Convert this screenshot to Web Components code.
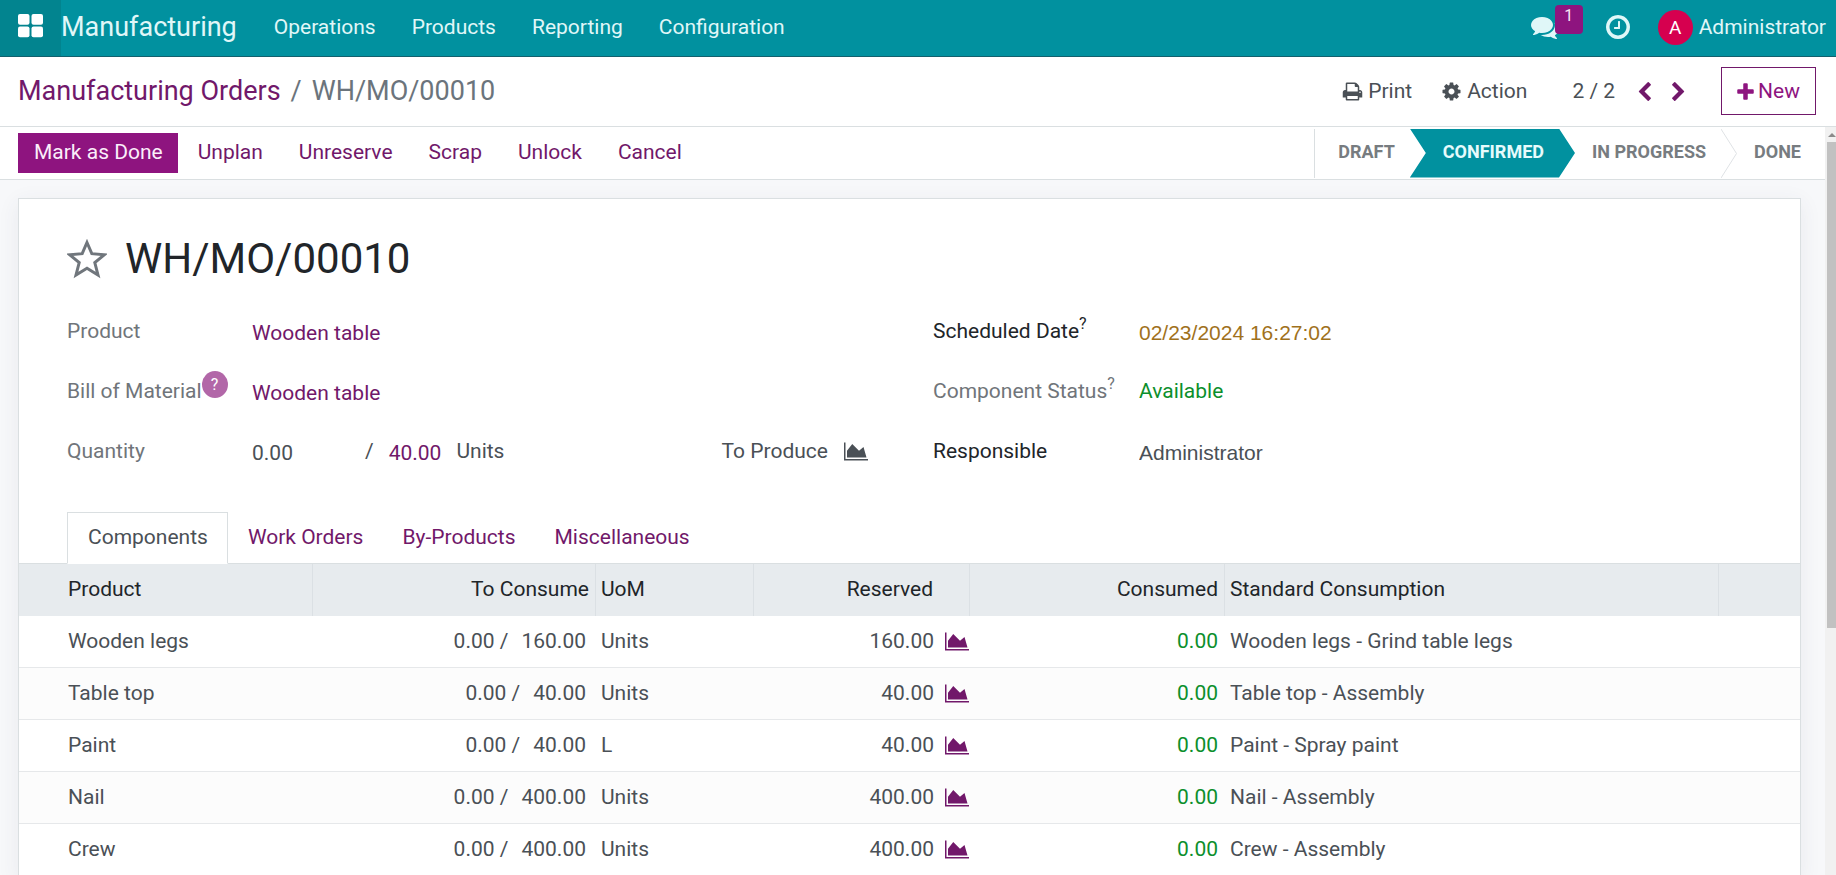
<!DOCTYPE html>
<html lang="en">
<head>
<meta charset="utf-8">
<title>WH/MO/00010 - Manufacturing</title>
<style>
  :root {
    --teal: #01919f;
    --teal-dark: #02848f;
    --purple: #8e147f;
    --link: #71186a;
    --ink: #212529;
    --text: #4a5056;
    --muted: #70757a;
    --line: #dadfe1;
    --green: #0c8f2c;
  }
  html, body { height: 100%; margin: 0; }
  body {
    font-family: Roboto, "Liberation Sans", sans-serif;
    font-size: 21px;
    line-height: 30px;
    color: var(--text);
    background: #fff;
    overflow: hidden;
  }
</style>
</head>
<body>
<mo-app></mo-app>

<script>
const define = (name, html, extend) => {
  const template = document.createElement('template');
  template.innerHTML = html;
  customElements.define(name, class extends HTMLElement {
    constructor() {
      super();
      this.attachShadow({ mode: 'open' }).append(template.content.cloneNode(true));
    }
    connectedCallback() { if (extend) extend(this, this.shadowRoot); }
  });
};

/* ---- icons ---- */
const ICONS = {
  area: ['0 0 2048 1792', '<path d="M2048 1536v128H0V128h128v1408h1920zM1664 512l256 896H256V832l448-576 576 576z"/>'],
  print: ['0 0 1792 1792', '<path d="M448 1536h896v-256H448v256zm0-640h896V512h-160q-40 0-68-28t-28-68V256H448v640zm1152 64q0-26-19-45t-45-19-45 19-19 45 19 45 45 19 45-19 19-45zm128 0v416q0 13-9.500 22.500t-22.500 9.500h-224v160q0 40-28 68t-68 28H416q-40 0-68-28t-28-68v-160H96q-13 0-22.500-9.500T64 1376V960q0-79 56.500-135.500T256 768h64V224q0-40 28-68t68-28h672q40 0 88 20t76 48l152 152q28 28 48 76t20 88v256h64q79 0 135.500 56.500T1728 960z"/>'],
  cog: ['0 0 1792 1792', '<path d="M1152 896q0-106-75-181t-181-75-181 75-75 181 75 181 181 75 181-75 75-181zm512-109v222q0 12-8 23t-20 13l-185 28q-19 54-39 91 35 50 107 138 10 12 10 25t-9 23q-27 37-99 108t-94 71q-12 0-26-9l-138-108q-44 23-91 38-16 136-29 186-7 28-36 28h-222q-14 0-24.500-8.500t-11.500-21.500l-28-184q-49-16-90-37l-141 107q-10 9-25 9-14 0-25-11-126-114-165-168-7-10-7-23 0-12 8-23 15-21 51-66.500t54-70.500q-27-50-41-99l-183-27q-13-2-21-12.500t-8-23.500v-222q0-12 8-23t19-13l186-28q14-46 39-92-40-57-107-138-10-12-10-24 0-10 9-23 26-36 98.500-107.500t94.500-71.500q13 0 26 10l138 107q44-23 91-38 16-136 29-186 7-28 36-28h222q14 0 24.500 8.500t11.500 21.500l28 184q49 16 90 37l142-107q9-9 24-9 13 0 25 10 129 119 165 170 7 8 7 22 0 12-8 23-15 21-51 66.500t-54 70.500q26 50 41 98l183 28q13 2 21 12.500t8 23.500z"/>'],
  plus: ['192 0 1408 1792', '<path d="M1600 800v192q0 40-28 68t-68 28h-416v416q0 40-28 68t-68 28H800q-40 0-68-28t-28-68v-416H288q-40 0-68-28t-28-68V800q0-40 28-68t68-28h416V288q0-40 28-68t68-28h192q40 0 68 28t28 68v416h416q40 0 68 28t28 68z"/>'],
  prev: ['0 -64 1792 1792', '<path d="M1427 301l-531 531 531 531q19 19 19 45t-19 45l-166 166q-19 19-45 19t-45-19L429 877q-19-19-19-45t19-45l742-742q19-19 45-19t45 19l166 166q19 19 19 45t-19 45z"/>'],
  next: ['0 -64 1792 1792', '<path d="M1363 877l-742 742q-19 19-45 19t-45-19l-166-166q-19-19-19-45t19-45l531-531-531-531q-19-19-19-45t19-45L531 45q19-19 45-19t45 19l742 742q19 19 19 45t-19 45z"/>'],
  comments: ['0 0 1792 1792', '<path d="M1408 768q0 139-94 257t-256.500 186.500T704 1280q-86 0-176-16-124 88-278 128-36 9-86 16h-3q-11 0-20.500-8t-11.500-21q-1-3-1-6.500t.5-6.500 2-6l2.500-5 3.500-5.500 4-5 4.500-5 4-4.500q5-6 23-25t26-29.500 22.500-29 25-38.500 20.500-44q-124-72-195-177T0 768q0-139 94-257t256.500-186.500T704 256t353.500 68.500T1314 511t94 257zm384 256q0 120-71 224.500T1526 1425q10 24 20.500 44t25 38.500 22.500 29 26 29.500 23 25q1 1 4 4.500t4.500 5 4 5 3.500 5.500l2.500 5 2 6 .5 6.500-1 6.500q-3 14-13 22t-22 7q-50-7-86-16-154-40-278-128-90 16-176 16-271 0-472-132 58 4 88 4 161 0 309-45t264-129q125-92 192-212t67-254q0-77-23-152 129 71 204 178t75 230z"/>'],
  clock: ['0 0 1792 1792', '<path d="M1024 544v448q0 14-9 23t-23 9H672q-14 0-23-9t-9-23v-64q0-14 9-23t23-9h224V544q0-14 9-23t23-9h64q14 0 23 9t9 23zm416 352q0-148-73-273t-198-198-273-73-273 73-198 198-73 273 73 273 198 198 273 73 273-73 198-198 73-273zm224 0q0 209-103 385.500T1281.500 1561 896 1664t-385.500-103T231 1281.500 128 896t103-385.500T510.500 231 896 128t385.500 103T1561 510.500 1664 896z"/>'],
  apps: ['0 0 25 24', '<rect width="11.500" height="10.800" rx="2"/><rect x="13.500" width="11.500" height="10.800" rx="2"/><rect y="12.500" width="11.500" height="10.800" rx="2"/><rect x="13.500" y="12.500" width="11.500" height="10.800" rx="2"/>'],
  star: ['0 0 40 40', '<path d="M20 3.500l4.800 11.200 12.700 1-9.700 7.800 3.200 12.500L20 29.300 9 36l3.200-12.500-9.700-7.800 12.700-1z" fill="none" stroke="currentColor" stroke-width="3"/>']
};
define('mo-icon', `
  <style>
    :host { display: inline-flex; flex: none; width: 21px; height: 21px; }
    svg { width: 100%; height: 100%; fill: currentColor; display: block; }
  </style>
  <svg aria-hidden="true"></svg>`, (host, root) => {
  const [box, shape] = ICONS[host.getAttribute('name')];
  const svg = root.querySelector('svg');
  svg.setAttribute('viewBox', box);
  svg.innerHTML = shape;
});

/* ---- top navigation ---- */
define('mo-navbar', `
  <style>
    :host { display: flex; align-items: stretch; height: 56px; background: var(--teal);
      border-bottom: 1px solid #12606d; color: #e0f7f8; }
    a { color: inherit; text-decoration: none; }
    button { font: inherit; color: inherit; background: none; border: 0; padding: 0; }
    .apps { width: 61px; background: var(--teal-dark); color: #fff; display: flex;
      align-items: center; padding: 0 0 4px 18px; box-sizing: border-box; }
    .apps mo-icon { width: 25px; height: 24px; }
    .brand { font-size: 27px; padding: 0 19px 2px 0; display: flex; align-items: center; }
    nav { display: flex; flex: 1; }
    nav a { display: flex; align-items: center; padding: 0 18px 2px; }
    .tray { display: flex; align-items: center; padding: 0 10px 2px 0; }
    .chat { position: relative; display: flex; margin-right: 45px; }
    .chat mo-icon, .clock mo-icon { width: 28px; height: 28px; }
    .badge { position: absolute; left: 24px; top: -8px; width: 28px; height: 29px; border-radius: 4px;
      background: var(--purple); color: #f5e6f4; font-size: 16px; line-height: 22px; text-align: center; }
    .clock { display: flex; margin-right: 26px; }
    .user { display: flex; align-items: center; gap: 6px; }
    .avatar { width: 35px; height: 35px; border-radius: 50%; background: #d6004f; color: #fff;
      font-size: 19px; line-height: 35px; text-align: center; }
  </style>
  <button class="apps" aria-label="Home menu"><mo-icon name="apps"></mo-icon></button>
  <a class="brand" href="#">Manufacturing</a>
  <nav>
    <a href="#">Operations</a><a href="#">Products</a><a href="#">Reporting</a><a href="#">Configuration</a>
  </nav>
  <div class="tray">
    <button class="chat" aria-label="Messages"><mo-icon name="comments"></mo-icon><span class="badge">1</span></button>
    <button class="clock" aria-label="Activities"><mo-icon name="clock"></mo-icon></button>
    <button class="user"><span class="avatar">A</span>Administrator</button>
  </div>`);

/* ---- breadcrumb and record actions ---- */
define('mo-control-panel', `
  <style>
    :host { display: flex; align-items: center; justify-content: space-between; box-sizing: border-box; height: 70px;
      padding: 0 20px 1px 18px; border-bottom: 1px solid var(--line); background: #fff; }
    ol { display: flex; gap: 10px; list-style: none; margin: 0; padding: 0; font-size: 27px; color: #6b747c; }
    a { color: var(--link); text-decoration: none; }
    button { font: inherit; color: inherit; background: none; border: 0; padding: 0; display: flex; align-items: center; }
    .actions { display: flex; align-items: center; }
    .menu { gap: 5px; margin-right: 29px; }
    .menu.last { margin-right: 45px; }
    .pager { margin-right: 12px; }
    .step { width: 34px; justify-content: center; color: var(--link); }
    .new { box-sizing: border-box; height: 48px; margin-left: 26px; padding: 0 15px; gap: 4px;
      border: 1px solid var(--link); color: var(--purple); }
    .new mo-icon { width: 17px; height: 21px; }
  </style>
  <ol><li><a href="#">Manufacturing Orders</a></li><li>/</li><li>WH/MO/00010</li></ol>
  <div class="actions">
    <button class="menu"><mo-icon name="print"></mo-icon>Print</button>
    <button class="menu last"><mo-icon name="cog"></mo-icon>Action</button>
    <span class="pager">2 / 2</span>
    <button class="step" aria-label="Previous"><mo-icon name="prev"></mo-icon></button>
    <button class="step" aria-label="Next"><mo-icon name="next"></mo-icon></button>
    <button class="new"><mo-icon name="plus"></mo-icon>New</button>
  </div>`);

/* ---- status bar ---- */
define('mo-button', `
  <style>
    :host { display: block; }
    button { font: inherit; height: 40px; padding: 0 16px 2px; border: 0; background: none; color: var(--link); display: block; }
    :host([primary]) button { background: var(--purple); color: #fbeefa; padding-right: 15px; }
  </style>
  <button><slot></slot></button>`);

define('mo-stage', `
  <style>
    :host { display: block; height: 49px; }
    button { font: inherit; font-size: 18px; font-weight: 700; color: #777c80; height: 100%; border: 0; background: none;
      display: block; padding: 0 15px 2px 33px; }
    :host([first]) button { padding-left: 23px; border-left: 1px solid var(--line); }
    :host([last]) button { padding-right: 24px; }
    :host([current]) button { background: var(--teal); color: #e6fbfc; padding-right: 31px;
      clip-path: polygon(0 0, calc(100% - 16px) 0, 100% 50%, calc(100% - 16px) 100%, 0 100%, 16px 50%); }
    :host([current]) { margin-right: -16px; }
    :host([arrow]) { display: flex; }
    svg { display: none; flex: none; width: 16px; height: 49px; margin-right: -16px; }
    :host([arrow]) svg { display: block; }
  </style>
  <button><slot></slot></button>
  <svg viewBox="0 0 16 49" aria-hidden="true"><path d="M0 0l15.500 24.500L0 49" fill="none" stroke="#dfe2e5"/></svg>`);

define('mo-status-bar', `
  <style>
    :host { display: flex; justify-content: space-between; align-items: center; height: 52px;
      background: #fff; border-bottom: 1px solid var(--line); padding-left: 18px; }
    div { display: flex; }
    .buttons { gap: 4px; }
  </style>
  <div class="buttons">
    <mo-button primary>Mark as Done</mo-button><mo-button>Unplan</mo-button><mo-button>Unreserve</mo-button>
    <mo-button>Scrap</mo-button><mo-button>Unlock</mo-button><mo-button>Cancel</mo-button>
  </div>
  <div>
    <mo-stage first>DRAFT</mo-stage><mo-stage current>CONFIRMED</mo-stage>
    <mo-stage arrow>IN PROGRESS</mo-stage><mo-stage last>DONE</mo-stage>
  </div>`);

/* ---- order form ---- */
define('mo-order-form', `
  <style>
    :host { display: block; padding: 35px 48px 0; }
    .title { display: flex; align-items: center; gap: 18px; height: 50px; }
    .title button { border: 0; background: none; padding: 0; color: #70767c; display: flex; }
    .title mo-icon { width: 40px; height: 40px; }
    h1 { margin: 0; font-size: 42px; line-height: 50px; font-weight: 400; color: var(--ink); }
    form { display: grid; grid-template-columns: 1fr 1fr; column-gap: 64px; margin: 17px 17px 0 0; }
    .row { display: grid; grid-template-columns: 185px 1fr; height: 60px; align-items: center; white-space: nowrap; }
    .col + .col .row { grid-template-columns: 206px 1fr; }
    label, .label { color: var(--muted); display: flex; align-items: center; }
    .strong { color: var(--ink); }
    a { color: var(--link); text-decoration: none; padding-top: 3px; }
    input { font: inherit; color: inherit; border: 0; padding: 3px 0 0; margin: 0; background: none; width: 100%; min-width: 0; outline: 0; }
    .plain { font-family: "Liberation Sans", Arial, sans-serif; }
    .date { color: #a0711c; }
    sup { font-size: 16px; line-height: 16px; padding-bottom: 14px; }
    .help { box-sizing: border-box; width: 26px; height: 27px; margin: 0 0 14px; padding: 0; border-radius: 50%;
      background: #b267a8; color: #fff; line-height: 27px; text-align: center; }
    .ok { color: var(--green); }
    .qty { display: flex; align-items: center; }
    .qty input { width: 112px; margin-right: 1px; }
    .qty a { margin: 0 15px; }
    .qty .produce { margin-left: auto; margin-right: 16px; }
    .qty button { border: 0; background: none; padding: 0; color: inherit; display: flex; margin-right: 1px; }
    .qty mo-icon { width: 24px; }
  </style>
  <div class="title">
    <button aria-label="Priority"><mo-icon name="star"></mo-icon></button>
    <h1>WH/MO/00010</h1>
  </div>
  <form>
    <div class="col">
      <div class="row"><span class="label">Product</span><a href="#">Wooden table</a></div>
      <div class="row"><span class="label">Bill of Material<sup class="help">?</sup></span><a href="#">Wooden table</a></div>
      <div class="row"><label for="qty">Quantity</label>
        <div class="qty"><input id="qty" value="0.00"><span>/</span><a href="#">40.00</a><span>Units</span>
          <span class="produce">To Produce</span><button type="button" aria-label="Forecast"><mo-icon name="area"></mo-icon></button></div>
      </div>
    </div>
    <div class="col">
      <div class="row"><label class="strong" for="date">Scheduled Date<sup>?</sup></label><input class="plain date" id="date" value="02/23/2024 16:27:02"></div>
      <div class="row"><span class="label">Component Status<sup>?</sup></span><span class="ok">Available</span></div>
      <div class="row"><label class="strong" for="user">Responsible</label><input class="plain" id="user" value="Administrator"></div>
    </div>
  </form>`);

/* ---- notebook ---- */
define('mo-tabs', `
  <style>
    :host { display: flex; margin-top: 31px; padding-left: 48px; border-bottom: 1px solid var(--line); }
    button { font: inherit; box-sizing: border-box; height: 52px; padding: 0 19px 2px 20px; margin-bottom: -1px;
      border: 0; background: none; color: var(--link); }
    .active { color: var(--text); background: #fff; border: 1px solid var(--line); border-bottom-color: #fff; }
  </style>
  <button class="active">Components</button><button>Work Orders</button><button>By-Products</button><button>Miscellaneous</button>`);

const LINES = [
  ['Wooden legs', '160.00', 'Units', 'Wooden legs - Grind table legs'],
  ['Table top', '40.00', 'Units', 'Table top - Assembly'],
  ['Paint', '40.00', 'L', 'Paint - Spray paint'],
  ['Nail', '400.00', 'Units', 'Nail - Assembly'],
  ['Crew', '400.00', 'Units', 'Crew - Assembly']
];
define('mo-lines', `
  <style>
    :host { display: block; }
    table { width: 100%; table-layout: fixed; border-collapse: separate; border-spacing: 0; }
    th, td { box-sizing: border-box; height: 52px; padding: 0 5px; text-align: left; font-weight: 400; white-space: nowrap; }
    th { background: #e7ebee; color: var(--ink); padding-bottom: 2px; border-right: 1px solid #dbe0e4; }
    th:last-child { border-right: 0; }
    td { border-bottom: 1px solid #e6e8ea; padding-bottom: 1px; }
    tbody tr:nth-child(even) { background: #fcfcfc; }
    th:first-child, td:first-child { padding-left: 49px; }
    .num { text-align: right; padding-right: 6px; }
    td.num { padding-right: 7px; }
    .use { text-align: right; padding-right: 10px; }
    .use span { margin-left: 13px; }
    th.res { text-align: right; padding-right: 36px; }
    td.res { padding-right: 1px; }
    .res div { display: flex; align-items: center; justify-content: flex-end; gap: 11px; }
    .res button { border: 0; background: none; padding: 0; color: var(--link); display: flex; }
    .res mo-icon { width: 24px; }
    .done { color: var(--green); }
  </style>
  <table>
    <colgroup><col style="width:294px"><col style="width:283px"><col style="width:158px"><col style="width:216px"><col style="width:255px"><col><col style="width:81px"></colgroup>
    <thead><tr><th>Product</th><th class="num">To Consume</th><th>UoM</th><th class="res">Reserved</th><th class="num">Consumed</th><th>Standard Consumption</th><th></th></tr></thead>
    <tbody></tbody>
  </table>`, (host, root) => {
  root.querySelector('tbody').innerHTML = LINES.map(([name, qty, unit, note]) => `
    <tr><td>${name}</td><td class="use">0.00 /<span>${qty}</span></td><td>${unit}</td>
    <td class="res"><div>${qty}<button aria-label="Forecast"><mo-icon name="area"></mo-icon></button></div></td>
    <td class="num done">0.00</td><td>${note}</td><td></td></tr>`).join('');
});

define('mo-scrollbar', `
  <style>
    :host { display: flex; flex-direction: column; width: 11px; background: #f1f1f1; overflow: hidden; }
    svg { width: 11px; height: 15px; flex: none; }
    i { height: 65%; margin-left: 2px; background: #c1c1c1; }
  </style>
  <svg viewBox="0 0 11 15" aria-hidden="true"><path d="M3 10l4-4 4 4z" fill="#8b8b8b"/></svg><i></i>`);

define('mo-app', `
  <style>
    :host { display: flex; flex-direction: column; height: 100vh; }
    .body { flex: 1; min-height: 0; display: flex; }
    main { flex: 1; min-width: 0; overflow: auto; scrollbar-width: none; background: #f7f8fa; }
    .sheet { margin: 18px 24px 18px 18px; background: #fff; border: 1px solid var(--line);
      box-shadow: 0 5px 20px rgba(60, 70, 90, 0.08); }
  </style>
  <mo-navbar></mo-navbar>
  <mo-control-panel></mo-control-panel>
  <div class="body">
    <main>
      <mo-status-bar></mo-status-bar>
      <div class="sheet"><mo-order-form></mo-order-form><mo-tabs></mo-tabs><mo-lines></mo-lines></div>
    </main>
    <mo-scrollbar></mo-scrollbar>
  </div>`);
</script>
</body>
</html>
